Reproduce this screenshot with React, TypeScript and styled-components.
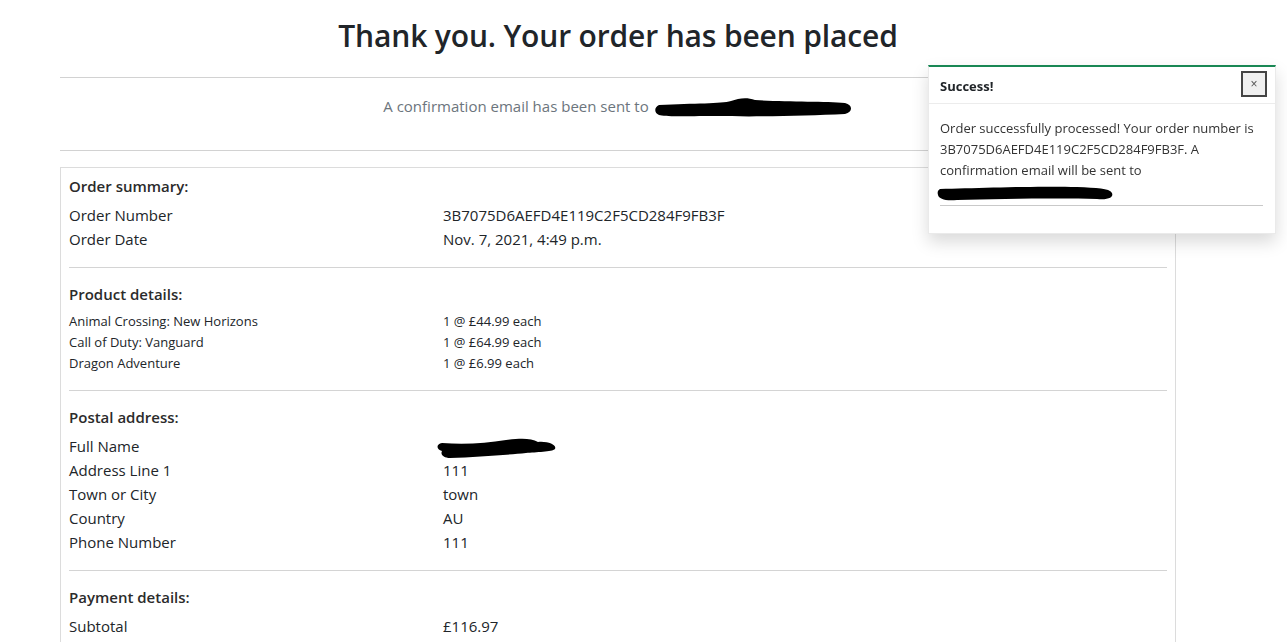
import React from "react";
import styled, { createGlobalStyle } from "styled-components";

const GlobalStyle = createGlobalStyle`
  html, body {
    margin: 0;
    padding: 0;
    background: #ffffff;
  }
  body {
    font-family: "Open Sans", "Liberation Sans", sans-serif;
    color: #212529;
    -webkit-font-smoothing: antialiased;
  }
`;

const Container = styled.main`
  width: 1116px;
  margin: 0 0 0 60px;
`;

const Title = styled.h1`
  margin: 17px 0 22px;
  font-size: 30px;
  line-height: 38px;
  font-weight: 600;
  text-align: center;
  color: #212529;
  letter-spacing: -0.15px;
`;

const Rule = styled.hr`
  margin: 0;
  border: 0;
  border-top: 1px solid #d2d2d2;
`;

const Lead = styled.p`
  margin: 16px 0 32px;
  height: 24px;
  font-size: 15px;
  line-height: 24px;
  color: #6c757d;
  text-align: center;
`;

const Redaction = styled.svg<{ $offset?: number }>`
  display: inline-block;
  vertical-align: middle;
  margin: -4px 0 -4px ${(p) => p.$offset ?? 0}px;
`;

const Card = styled.section`
  margin-top: 16px;
  border: 1px solid #dcdcdc;
  border-bottom: 0;
  padding: 6px 8px 60px;
`;

const Section = styled.div`
  padding: 14px 0 16px;
  &:first-child {
    padding-top: 0;
  }
  & + & {
    border-top: 1px solid #d4d4d4;
  }
`;

const SectionTitle = styled.h6`
  margin: 0 0 5px;
  font-size: 15px;
  line-height: 24px;
  font-weight: 600;
  color: #2b2b2b;
`;

const Row = styled.div<{ $small?: boolean }>`
  display: grid;
  grid-template-columns: 374px 1fr;
  align-items: center;
  height: ${(p) => (p.$small ? "21px" : "24px")};
  font-size: ${(p) => (p.$small ? "13px" : "15px")};
  line-height: ${(p) => (p.$small ? "21px" : "24px")};
  color: #212529;
`;

const Toast = styled.aside`
  position: fixed;
  top: 65px;
  right: 11px;
  width: 348px;
  box-sizing: border-box;
  background: #ffffff;
  border: 1px solid rgba(0, 0, 0, 0.08);
  border-top: 2px solid #198754;
  box-shadow: 0 8px 16px rgba(0, 0, 0, 0.15);
`;

const ToastHeader = styled.header`
  height: 36px;
  display: flex;
  align-items: center;
  justify-content: space-between;
  padding: 0 8px 0 11px;
  border-bottom: 1px solid #ececec;
`;

const ToastTitle = styled.strong`
  font-size: 13px;
  font-weight: 700;
  color: #212529;
  margin-top: 2px;
`;

const CloseButton = styled.button`
  width: 26px;
  height: 26px;
  box-sizing: border-box;
  margin-top: -3px;
  padding: 0;
  border: 2px solid #444;
  background: #efefef;
  color: #555;
  font-family: "Liberation Sans", sans-serif;
  font-size: 12px;
  line-height: 20px;
  cursor: pointer;
`;

const ToastBody = styled.div`
  padding: 14px 12px 0 11px;
  font-size: 13px;
  line-height: 21px;
  color: #333;
`;

const ToastRule = styled.hr`
  margin: 3px 0 27px;
  border: 0;
  border-top: 1px solid #c9c9c9;
`;

const BlobLead = () => (
  <Redaction width="198" height="22" viewBox="0 0 198 22" $offset={6}>
    <path
      d="M4,8 C40,6 66,7 76,4 C84,1 92,0 100,3 C130,5 170,4 190,6 C198,8 198,15 190,17 C150,19 100,20 60,19 C30,19 10,20 4,18 C-1,16 -1,10 4,8 Z"
      fill="#000"
    />
  </Redaction>
);

const BlobName = () => (
  <Redaction width="122" height="22" viewBox="0 0 122 22" $offset={-7}>
    <path
      d="M6,6 C30,8 50,6 70,3 C85,1 95,1 102,5 C112,4 121,8 119,12 C116,15 100,15 90,16 C70,18 40,20 14,21 C8,21 4,18 6,14 C0,12 0,7 6,6 Z"
      fill="#000"
    />
  </Redaction>
);

const BlobToast = () => (
  <Redaction width="178" height="16" viewBox="0 0 178 16" $offset={-3}>
    <path
      d="M3,4 C40,3 100,1 140,2 C160,3 172,3 175,8 C177,13 170,15 160,14 C120,13 60,14 20,15 C8,16 2,14 1,10 C0,7 1,5 3,4 Z"
      fill="#000"
    />
  </Redaction>
);

type Item = [string, React.ReactNode];

const summary: Item[] = [
  ["Order Number", "3B7075D6AEFD4E119C2F5CD284F9FB3F"],
  ["Order Date", "Nov. 7, 2021, 4:49 p.m."],
];

const products: Item[] = [
  ["Animal Crossing: New Horizons", "1 @ £44.99 each"],
  ["Call of Duty: Vanguard", "1 @ £64.99 each"],
  ["Dragon Adventure", "1 @ £6.99 each"],
];

const address: Item[] = [
  ["Full Name", <BlobName />],
  ["Address Line 1", "111"],
  ["Town or City", "town"],
  ["Country", "AU"],
  ["Phone Number", "111"],
];

const payment: Item[] = [["Subtotal", "£116.97"]];

const DetailSection = ({ title, items, small }: { title: string; items: Item[]; small?: boolean }) => (
  <Section>
    <SectionTitle>{title}</SectionTitle>
    {items.map(([label, value]) => (
      <Row key={label} $small={small}>
        <span>{label}</span>
        <span>{value}</span>
      </Row>
    ))}
  </Section>
);

export default function App() {
  return (
    <>
      <GlobalStyle />
      <Container>
        <Title>Thank you. Your order has been placed</Title>
        <Rule />
        <Lead>
          A confirmation email has been sent to
          <BlobLead />
        </Lead>
        <Rule />
        <Card>
          <DetailSection title="Order summary:" items={summary} />
          <DetailSection title="Product details:" items={products} small />
          <DetailSection title="Postal address:" items={address} />
          <DetailSection title="Payment details:" items={payment} />
        </Card>
      </Container>
      <Toast role="alert">
        <ToastHeader>
          <ToastTitle>Success!</ToastTitle>
          <CloseButton aria-label="Close">×</CloseButton>
        </ToastHeader>
        <ToastBody>
          Order successfully processed! Your order number is 3B7075D6AEFD4E119C2F5CD284F9FB3F. A confirmation
          email will be sent to <BlobToast />
          <ToastRule />
        </ToastBody>
      </Toast>
    </>
  );
}
